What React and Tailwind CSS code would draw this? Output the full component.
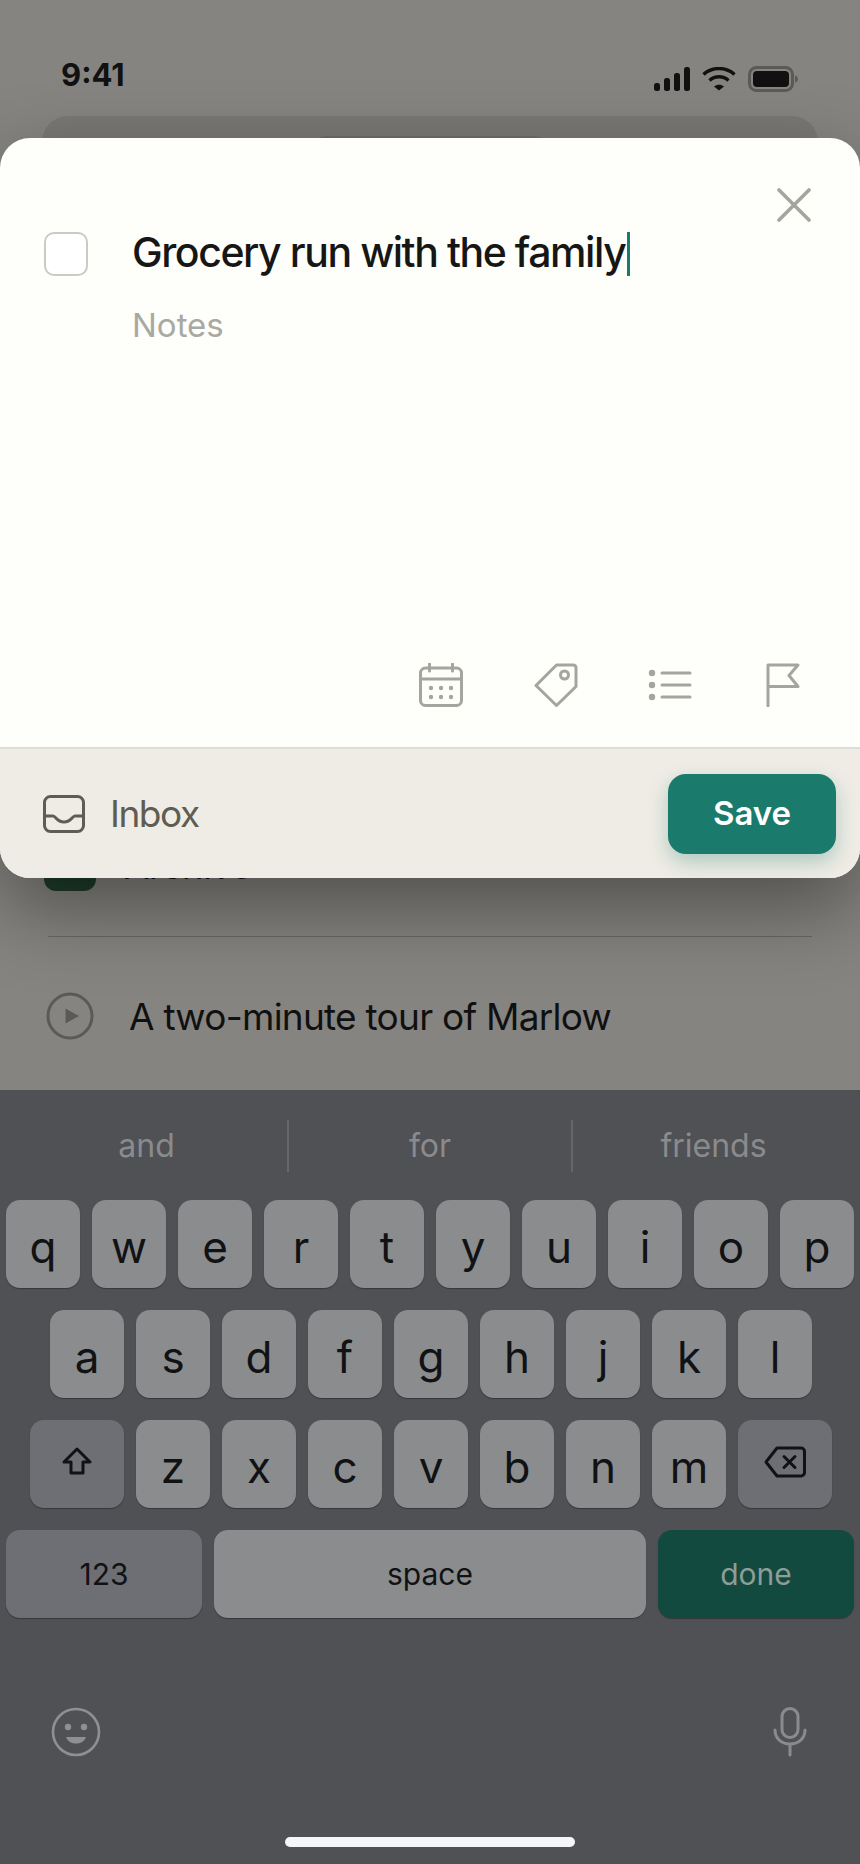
const rows = [
    ["q", "w", "e", "r", "t", "y", "u", "i", "o", "p"],
    ["a", "s", "d", "f", "g", "h", "j", "k", "l"],
    ["z", "x", "c", "v", "b", "n", "m"],
];

function Key({ children, className = "w-[74px] bg-[#8b8c8e]" }) {
    return (
        <div className={`h-[88px] rounded-[14px] shadow-[0_1px_1px_#36373a] flex items-center justify-center text-[#111214] ${className}`}>
            {children}
        </div>
    );
}

function LetterKey({ label }) {
    return (
        <Key>
            <span className="text-[44px] leading-none pt-[6px]">{label}</span>
        </Key>
    );
}

function StatusIcons() {
    return (
        <div className="flex items-center gap-[12px] mt-[8px]">
            <svg width="36" height="24" viewBox="0 0 36 24" fill="#111">
                <rect x="0" y="16" width="6" height="8" rx="2.5" />
                <rect x="10" y="11" width="6" height="13" rx="2.5" />
                <rect x="20" y="6" width="6" height="18" rx="2.5" />
                <rect x="30" y="0" width="6" height="24" rx="2.5" />
            </svg>
            <svg width="34" height="24" viewBox="0 0 34 24" fill="none" stroke="#111" strokeWidth="3.4">
                <path d="M1.5 7.5C10 -0.5 24 -0.5 32.5 7.5" />
                <path d="M7.5 13.5C13 8.5 21 8.5 26.5 13.5" />
                <path d="M12 19.5L17 23.5L22 19.5C19 17 15 17 12 19.5Z" fill="#111" stroke="none" />
            </svg>
            <svg width="50" height="26" viewBox="0 0 50 26" fill="none">
                <rect x="1.5" y="1.5" width="43" height="23" rx="7" stroke="#5b5a58" strokeWidth="3" />
                <rect x="5" y="5" width="36" height="16" rx="4" fill="#111" />
                <path d="M47 9.5C49 10 50 11.5 50 13C50 14.5 49 16 47 16.5Z" fill="#5b5a58" />
            </svg>
        </div>
    );
}

function CloseIcon() {
    return (
        <svg width="34" height="34" viewBox="0 0 34 34" fill="none" stroke="#a5a59f" strokeWidth="3.6" strokeLinecap="round">
            <path d="M2 2L32 32M32 2L2 32" />
        </svg>
    );
}

function CalendarIcon() {
    return (
        <svg width="44" height="44" viewBox="0 0 44 44" fill="none" stroke="#a5a59f" strokeWidth="3" strokeLinecap="round">
            <rect x="1.5" y="5" width="41" height="37.5" rx="5" />
            <path d="M1.5 16H42.5M10.5 1V8M33.5 1V8" />
            <g fill="#a5a59f" stroke="none">
                <circle cx="12" cy="25" r="2.2" />
                <circle cx="22" cy="25" r="2.2" />
                <circle cx="32" cy="25" r="2.2" />
                <circle cx="12" cy="34" r="2.2" />
                <circle cx="22" cy="34" r="2.2" />
                <circle cx="32" cy="34" r="2.2" />
            </g>
        </svg>
    );
}

function TagIcon() {
    return (
        <svg width="44" height="44" viewBox="0 0 44 44" fill="none" stroke="#a5a59f" strokeWidth="3" strokeLinejoin="round">
            <path d="M22.5 2H39C41 2 42 3 42 5V23.5L22.5 42.5L2 22.5Z" />
            <circle cx="30.5" cy="12" r="4" />
        </svg>
    );
}

function ListIcon() {
    return (
        <svg width="44" height="44" viewBox="0 0 44 44" fill="none" stroke="#a5a59f" strokeWidth="3" strokeLinecap="round">
            <path d="M14 10H42M14 22H42M14 34H42" />
            <g fill="#a5a59f" stroke="none">
                <circle cx="4" cy="10" r="3.2" />
                <circle cx="4" cy="22" r="3.2" />
                <circle cx="4" cy="34" r="3.2" />
            </g>
        </svg>
    );
}

function FlagIcon() {
    return (
        <svg width="34" height="44" viewBox="0 0 34 44" fill="none" stroke="#a5a59f" strokeWidth="3" strokeLinecap="round" strokeLinejoin="round">
            <path d="M2 43V2H32L23 12.5L32 23.5H2" />
        </svg>
    );
}

function InboxIcon() {
    return (
        <svg width="42" height="38" viewBox="0 0 42 38" fill="none" stroke="#5e5c53" strokeWidth="3" strokeLinejoin="round">
            <rect x="1.5" y="1.5" width="39" height="35" rx="6" />
            <path d="M1.5 21H10C13 21 13.5 27 21 27C28.5 27 29 21 32 21H40.5" />
        </svg>
    );
}

function PlayIcon() {
    return (
        <svg width="48" height="48" viewBox="0 0 48 48" fill="none">
            <circle cx="24" cy="24" r="22" stroke="#5a5a58" strokeWidth="3" />
            <path d="M19.5 16.5L33 24L19.5 31.5Z" fill="#5a5a58" />
        </svg>
    );
}

function ShiftIcon() {
    return (
        <svg width="30" height="28" viewBox="0 0 30 28" fill="none" stroke="#111214" strokeWidth="3" strokeLinejoin="round" className="-mt-[7px]">
            <path d="M15 2L28 15H21V26H9V15H2Z" />
        </svg>
    );
}

function BackspaceIcon() {
    return (
        <svg width="42" height="32" viewBox="0 0 42 32" fill="none" stroke="#111214" strokeWidth="3" strokeLinejoin="round" className="-mt-[5px]">
            <path d="M13 2H37C39 2 40.5 3.5 40.5 5.5V26.5C40.5 28.5 39 30 37 30H13L2 16Z" />
            <path d="M20 10.5L31 21.5M31 10.5L20 21.5" strokeLinecap="round" />
        </svg>
    );
}

function EmojiIcon() {
    return (
        <svg width="50" height="50" viewBox="0 0 50 50" fill="none">
            <circle cx="25" cy="25" r="23" stroke="#8f9092" strokeWidth="2.6" />
            <circle cx="17" cy="20" r="3.2" fill="#8f9092" />
            <circle cx="33" cy="20" r="3.2" fill="#8f9092" />
            <path d="M15 30H35C33 35 29 36.5 25 36.5C21 36.5 17 35 15 30Z" fill="#8f9092" />
        </svg>
    );
}

function MicIcon() {
    return (
        <svg width="34" height="50" viewBox="0 0 34 50" fill="none" stroke="#8a8b8d" strokeWidth="3" strokeLinecap="round">
            <rect x="9" y="1.5" width="16" height="29" rx="8" />
            <path d="M2 23C2 31 8 37 17 37C26 37 32 31 32 23M17 37V48" />
        </svg>
    );
}

function TaskSheet() {
    return (
        <div className="absolute left-0 right-0 top-[138px] h-[740px] rounded-[30px] overflow-hidden flex flex-col bg-[#fefefa]">
            <div className="flex-1 flex flex-col pl-[44px] pr-[49px] pt-[50px]">
                <div className="flex justify-between items-start">
                    <div className="flex">
                        <div className="w-[44px] h-[44px] mt-[44px] rounded-[10px] border-2 border-[#cbcbc6] bg-white" />
                        <div className="ml-[44px] mt-[42px]">
                            <div className="flex items-center h-[48px]">
                                <span className="text-[41px] leading-none tracking-[-0.035em] font-medium text-[#161614] pb-[4px]">Grocery run with the family</span>
                                <span className="w-[3px] h-[44px] ml-[2px] bg-[#1a7a6c]" />
                            </div>
                            <div className="mt-[31px] text-[33px] leading-none text-[#a9a9a3]">Notes</div>
                        </div>
                    </div>
                    <CloseIcon />
                </div>
                <div className="mt-auto mb-[40px] mr-[11px] flex justify-end">
                    <div className="flex items-center">
                        <CalendarIcon />
                        <div className="ml-[71px]"><TagIcon /></div>
                        <div className="ml-[70px]"><ListIcon /></div>
                        <div className="ml-[74px]"><FlagIcon /></div>
                    </div>
                </div>
            </div>
            <div className="h-[131px] border-t-2 border-[#dedcd6] bg-[#efece5] flex items-center justify-between pl-[43px] pr-[24px]">
                <div className="flex items-center gap-[25px]">
                    <InboxIcon />
                    <span className="text-[37px] leading-none tracking-[-0.04em] text-[#5e5c53]">Inbox</span>
                </div>
                <button className="w-[168px] h-[80px] rounded-[18px] bg-[#1a7a6c] text-white text-[33px] font-semibold shadow-[0_8px_20px_rgba(26,122,108,0.3)]">
                    Save
                </button>
            </div>
        </div>
    );
}

function Keyboard() {
    return (
        <div className="h-[774px] bg-[#505155] flex flex-col">
            <div className="flex pt-[30px] h-[82px] text-[32px] text-[#8a8b8d] leading-none">
                <div className="w-[289px] pl-[6px] flex items-center justify-center border-r-2 border-[#66676a]">and</div>
                <div className="w-[284px] flex items-center justify-center border-r-2 border-[#66676a]">for</div>
                <div className="flex-1 pr-[6px] flex items-center justify-center">friends</div>
            </div>
            <div className="mt-[28px] flex flex-col gap-[22px]">
                <div className="flex justify-center gap-[12px]">
                    {rows[0].map((k) => <LetterKey key={k} label={k} />)}
                </div>
                <div className="flex justify-center gap-[12px] pl-[2px]">
                    {rows[1].map((k) => <LetterKey key={k} label={k} />)}
                </div>
                <div className="flex gap-[12px] pl-[30px]">
                    <Key className="w-[94px] bg-[#6e6f74]"><ShiftIcon /></Key>
                    {rows[2].map((k) => <LetterKey key={k} label={k} />)}
                    <Key className="w-[94px] bg-[#6e6f74]"><BackspaceIcon /></Key>
                </div>
                <div className="flex gap-[12px] px-[6px] text-[30px]">
                    <Key className="w-[196px] bg-[#6e6f74]">123</Key>
                    <Key className="flex-1 bg-[#8b8c8e]">space</Key>
                    <Key className="w-[196px] bg-[#134a40]"><span className="text-[#8f9c98]">done</span></Key>
                </div>
            </div>
            <div className="mt-[89px] flex items-center justify-between pl-[51px] pr-[53px]">
                <EmojiIcon />
                <MicIcon />
            </div>
            <div className="mt-[80px] mx-auto w-[290px] h-[10px] rounded-full bg-[#f5f6f8]" />
        </div>
    );
}

export default function App() {
    return (
        <div className="relative w-full h-[1864px] overflow-hidden flex flex-col bg-[#868480] font-['Inter',sans-serif]">
            <div className="flex items-start justify-between h-[116px] pt-[58px] pl-[61px] pr-[62px]">
                <span className="text-[31px] leading-[34px] font-bold text-[#111]">9:41</span>
                <StatusIcons />
            </div>
            <div className="mx-[42px] h-[60px] pt-[20px] rounded-t-[26px] bg-[#7a7875]">
                <div className="mx-auto w-[230px] h-[30px] rounded-t-[10px] bg-[#6f6d6a]" />
            </div>
            <div className="flex-1 flex flex-col justify-end pb-[50px] text-[37px] text-[#101010] tracking-[-0.02em]">
                <div className="flex items-center pl-[44px] h-[52px]">
                    <div className="w-[52px] h-[52px] rounded-[12px] bg-[#1e3d2b]" />
                    <span className="ml-[28px] leading-none">Archive</span>
                </div>
                <div className="mt-[45px] mx-[48px] h-[1px] bg-[#696864]" />
                <div className="mt-[55px] flex items-center pl-[46px]">
                    <PlayIcon />
                    <span className="ml-[35px] leading-none">A two-minute tour of Marlow</span>
                </div>
            </div>
            <Keyboard />
            <div className="absolute left-0 right-0 top-[138px] h-[740px] rounded-[30px] shadow-[0_30px_80px_rgba(0,0,0,0.4)]" />
            <TaskSheet />
        </div>
    );
}
